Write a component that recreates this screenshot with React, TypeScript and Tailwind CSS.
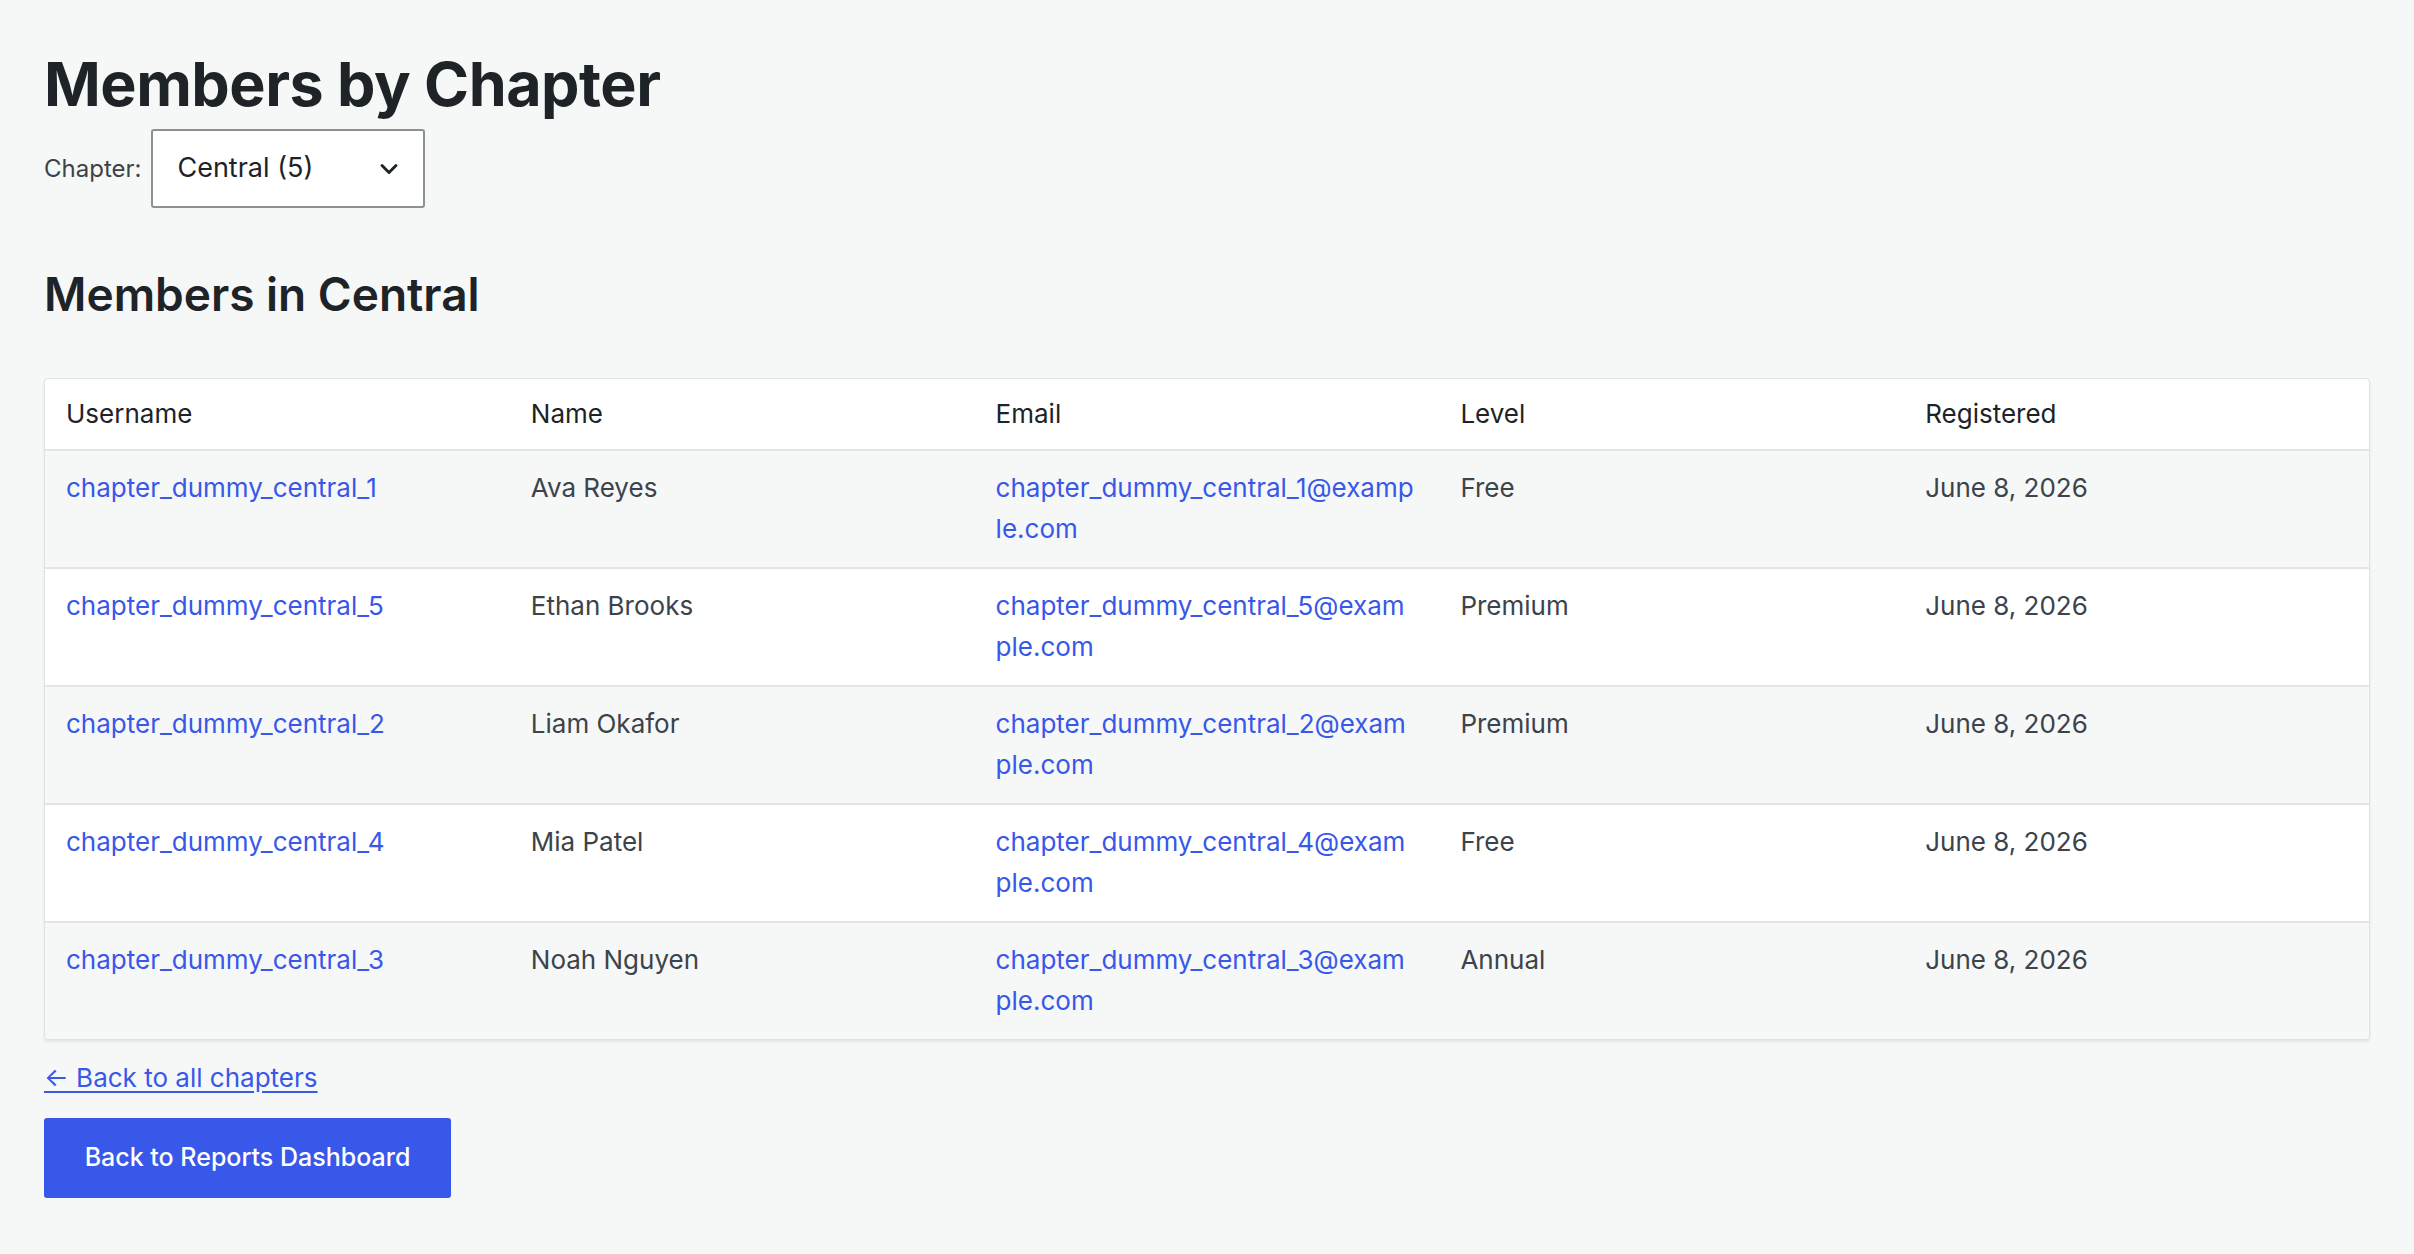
import { ChevronDown } from 'lucide-react';

const rows = [
  { user: 'chapter_dummy_central_1', name: 'Ava Reyes', level: 'Free' },
  { user: 'chapter_dummy_central_5', name: 'Ethan Brooks', level: 'Premium' },
  { user: 'chapter_dummy_central_2', name: 'Liam Okafor', level: 'Premium' },
  { user: 'chapter_dummy_central_4', name: 'Mia Patel', level: 'Free' },
  { user: 'chapter_dummy_central_3', name: 'Noah Nguyen', level: 'Annual' },
];

export default function App() {
  return (
    <div className="min-h-screen bg-[#f6f7f7] px-[44px] pt-[44px] pb-10 text-[#1d2327] font-[family-name:Inter,sans-serif]">
      <h1 className="text-[61px] font-bold leading-[80px] tracking-[-0.5px]">Members by Chapter</h1>

      {/* Chapter filter */}
      <div className="mt-[5px] flex items-center gap-[10px]">
        <span className="text-[24px] text-[#3c434a]">Chapter:</span>
        <div className="flex h-[79px] w-[274px] items-center justify-between rounded-[3px] border-2 border-[#8c8f94] bg-white pl-[24px] pr-[20px]">
          <span className="text-[27px] text-[#1d2327]">Central (5)</span>
          <ChevronDown className="h-[28px] w-[28px] text-[#1d2327]" strokeWidth={2.5} />
        </div>
      </div>

      <h2 className="mt-[56px] text-[46px] font-semibold leading-[60px]">Members in Central</h2>

      {/* Members table */}
      <div className="mt-[54px] overflow-hidden rounded-[4px] border border-[#e0e2e6] bg-white shadow-[0_2px_3px_rgba(0,0,0,0.08)]">
        <div className="grid grid-cols-5 border-b-2 border-[#e2e4e7] text-[26px] leading-[40px] text-[#1d2327]">
          {['Username', 'Name', 'Email', 'Level', 'Registered'].map((h) => (
            <div key={h} className="px-[21px] py-[15px]">{h}</div>
          ))}
        </div>
        {rows.map((r, i) => (
          <div
            key={r.user}
            className={`grid grid-cols-5 text-[26px] leading-[41px] text-[#3c434a] ${
              i % 2 === 0 ? 'bg-[#f6f7f7]' : 'bg-white'
            } ${i < rows.length - 1 ? 'border-b-2 border-[#e2e4e7]' : ''}`}
          >
            <div className="h-[116px] px-[21px] pt-[16px]">
              <a className="text-[#3858e9]">{r.user}</a>
            </div>
            <div className="px-[21px] pt-[16px]">{r.name}</div>
            <div className="px-[21px] pt-[16px]">
              <a className="break-all text-[#3858e9]">{r.user}@example.com</a>
            </div>
            <div className="px-[21px] pt-[16px]">{r.level}</div>
            <div className="px-[21px] pt-[16px]">June 8, 2026</div>
          </div>
        ))}
      </div>

      <a className="mt-[18px] inline-block text-[26px] leading-[40px] text-[#3858e9] underline underline-offset-[4px]">
        ← Back to all chapters
      </a>

      <div className="mt-[20px]">
        <button className="h-[80px] w-[407px] rounded-[3px] bg-[#3858e9] text-[25px] font-medium text-white">
          Back to Reports Dashboard
        </button>
      </div>
    </div>
  );
}
